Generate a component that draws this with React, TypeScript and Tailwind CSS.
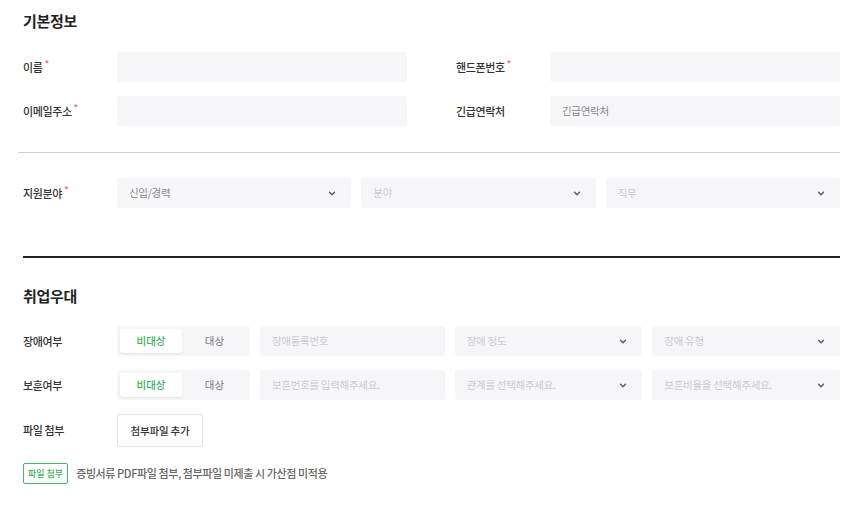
import React from "react";

const Chevron = () => (
  <svg width="8" height="5" viewBox="0 0 8 5" fill="none" className="shrink-0">
    <path d="M1.5 1.2L4 3.7L6.5 1.2" stroke="#555" strokeWidth="1.3" strokeLinecap="round" strokeLinejoin="round" />
  </svg>
);

const Label: React.FC<{ text: string; required?: boolean }> = ({ text, required }) => (
  <div className="w-[94px] shrink-0 text-[11px] tracking-[-0.4px] font-medium text-[#333] flex items-start">
    <span>{text}</span>
    {required && <span className="text-[#f46a6a] text-[10px] leading-[10px] ml-[2px]">*</span>}
  </div>
);

const Field: React.FC<{ placeholder?: string; className?: string }> = ({ placeholder, className }) => (
  <div className={`h-[30px] bg-[#f6f6f9] rounded-[3px] flex items-center px-[12px] text-[10.5px] tracking-[-0.3px] text-[#cbcbd2] ${className ?? ""}`}>
    {placeholder}
  </div>
);

const Select: React.FC<{ placeholder: string; dark?: boolean; className?: string }> = ({ placeholder, dark, className }) => (
  <div className={`h-[30px] bg-[#f6f6f9] rounded-[3px] flex items-center justify-between pl-[12px] pr-[15px] text-[10.5px] tracking-[-0.3px] ${dark ? "text-[#888]" : "text-[#cbcbd2]"} ${className ?? ""}`}>
    <span>{placeholder}</span>
    <Chevron />
  </div>
);

const Toggle = () => (
  <div className="w-[133px] h-[30px] bg-[#f6f6f9] rounded-[3px] p-[3px] flex shrink-0">
    <div className="w-[62px] h-full bg-white rounded-[3px] shadow-[0_1px_2px_rgba(0,0,0,0.08)] flex items-center justify-center text-[10.5px] font-medium text-[#3fae5a]">
      비대상
    </div>
    <div className="flex-1 flex items-center justify-center text-[10.5px] text-[#777]">대상</div>
  </div>
);

export default function App() {
  return (
    <div
      className="w-[856px] h-[511px] bg-white overflow-hidden pt-[10px]"
      style={{ fontFamily: '"Noto Sans CJK KR", "Noto Sans", sans-serif' }}
    >
      <div className="px-[23px] w-[863px]">
        <h2 className="text-[15px] leading-[22px] tracking-[-0.3px] font-bold text-[#222]">기본정보</h2>

        <div className="mt-[20px] grid grid-cols-2 gap-x-[49px] gap-y-[14px] w-[817px]">
          <div className="flex items-center">
            <Label text="이름" required />
            <Field className="flex-1" />
          </div>
          <div className="flex items-center">
            <Label text="핸드폰번호" required />
            <Field className="flex-1" />
          </div>
          <div className="flex items-center">
            <Label text="이메일주소" required />
            <Field className="flex-1" />
          </div>
          <div className="flex items-center">
            <Label text="긴급연락처" />
            <Field className="flex-1 !text-[#888]" placeholder="긴급연락처" />
          </div>
        </div>
      </div>

      <div className="mt-[26px] ml-[18px] w-[822px] h-px bg-[#cfcfcf]" />

      <div className="px-[23px]">
        <div className="mt-[25px] flex items-center w-[817px]">
          <Label text="지원분야" required />
          <div className="flex-1 flex gap-[10px]">
            <Select placeholder="신입/경력" dark className="flex-1" />
            <Select placeholder="분야" className="flex-1" />
            <Select placeholder="직무" className="flex-1" />
          </div>
        </div>

        <div className="mt-[48px] w-[817px] h-[2px] bg-[#222]" />

        <h2 className="mt-[27px] text-[15px] leading-[22px] tracking-[-0.3px] font-bold text-[#222]">취업우대</h2>

        <div className="mt-[19px] flex flex-col gap-[14px] w-[817px]">
          <div className="flex items-center">
            <Label text="장애여부" />
            <Toggle />
            <div className="flex-1 flex gap-[10px] ml-[10px]">
              <Field className="flex-1" placeholder="장애등록번호" />
              <Select placeholder="장애 정도" className="flex-1" />
              <Select placeholder="장애 유형" className="flex-1" />
            </div>
          </div>
          <div className="flex items-center">
            <Label text="보훈여부" />
            <Toggle />
            <div className="flex-1 flex gap-[10px] ml-[10px]">
              <Field className="flex-1" placeholder="보훈번호를 입력해주세요." />
              <Select placeholder="관계를 선택해주세요." className="flex-1" />
              <Select placeholder="보훈비율을 선택해주세요." className="flex-1" />
            </div>
          </div>
          <div className="flex items-center">
            <Label text="파일 첨부" />
            <button className="h-[33px] w-[86px] bg-white border border-[#e2e2e6] rounded-[2px] text-[10.5px] tracking-[-0.2px] font-medium text-[#333]">
              첨부파일 추가
            </button>
          </div>
        </div>

        <div className="mt-[16px] flex items-center gap-[8px]">
          <span className="h-[21px] px-[4px] border border-[#4cb36a] rounded-[2px] flex items-center text-[9px] font-medium text-[#3fae5a]">
            파일 첨부
          </span>
          <span className="text-[11px] tracking-[-0.4px] font-medium text-[#666]">
            증빙서류 PDF파일 첨부, 첨부파일 미제출 시 가산점 미적용
          </span>
        </div>
      </div>
    </div>
  );
}
